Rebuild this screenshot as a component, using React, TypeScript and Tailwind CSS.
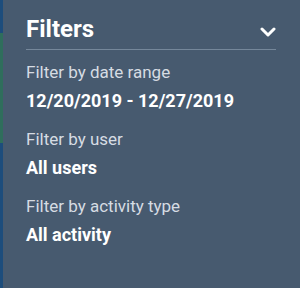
const filters = [
  { label: 'Filter by date range', value: '12/20/2019 - 12/27/2019' },
  { label: 'Filter by user', value: 'All users' },
  { label: 'Filter by activity type', value: 'All activity' },
]

export default function App() {
  return (
    <div className="flex h-[288px] w-[300px] bg-[#475a6f] font-['Roboto',sans-serif]">
      {/* accent strip on the left edge */}
      <div className="flex w-[3px] flex-col">
        <div className="h-[33px] bg-[#1d4d7c]" />
        <div className="h-[110px] bg-[#2f6e5c]" />
        <div className="flex-1 bg-[#1d4d7c]" />
      </div>

      <div className="flex-1 pl-[23px] pr-[24px] pt-[13px]">
        <div className="flex items-start justify-between border-b border-[#75879a] pb-[4px]">
          <h2 className="text-[24px] font-bold leading-[32px] text-white">Filters</h2>
          <svg className="mt-[14px]" width="16" height="10" viewBox="0 0 16 10" fill="none">
            <polyline points="2,2 8,8 14,2" stroke="white" strokeWidth="3" strokeLinecap="round" strokeLinejoin="round" />
          </svg>
        </div>

        <div className="mt-[12px] flex flex-col gap-[16px]">
          {filters.map((f) => (
            <div key={f.label}>
              <p className="text-[17px] leading-[20px] text-[#d6dce3]">{f.label}</p>
              <p className="mt-[7px] text-[18px] font-bold leading-[24px] text-white">{f.value}</p>
            </div>
          ))}
        </div>
      </div>
    </div>
  )
}
